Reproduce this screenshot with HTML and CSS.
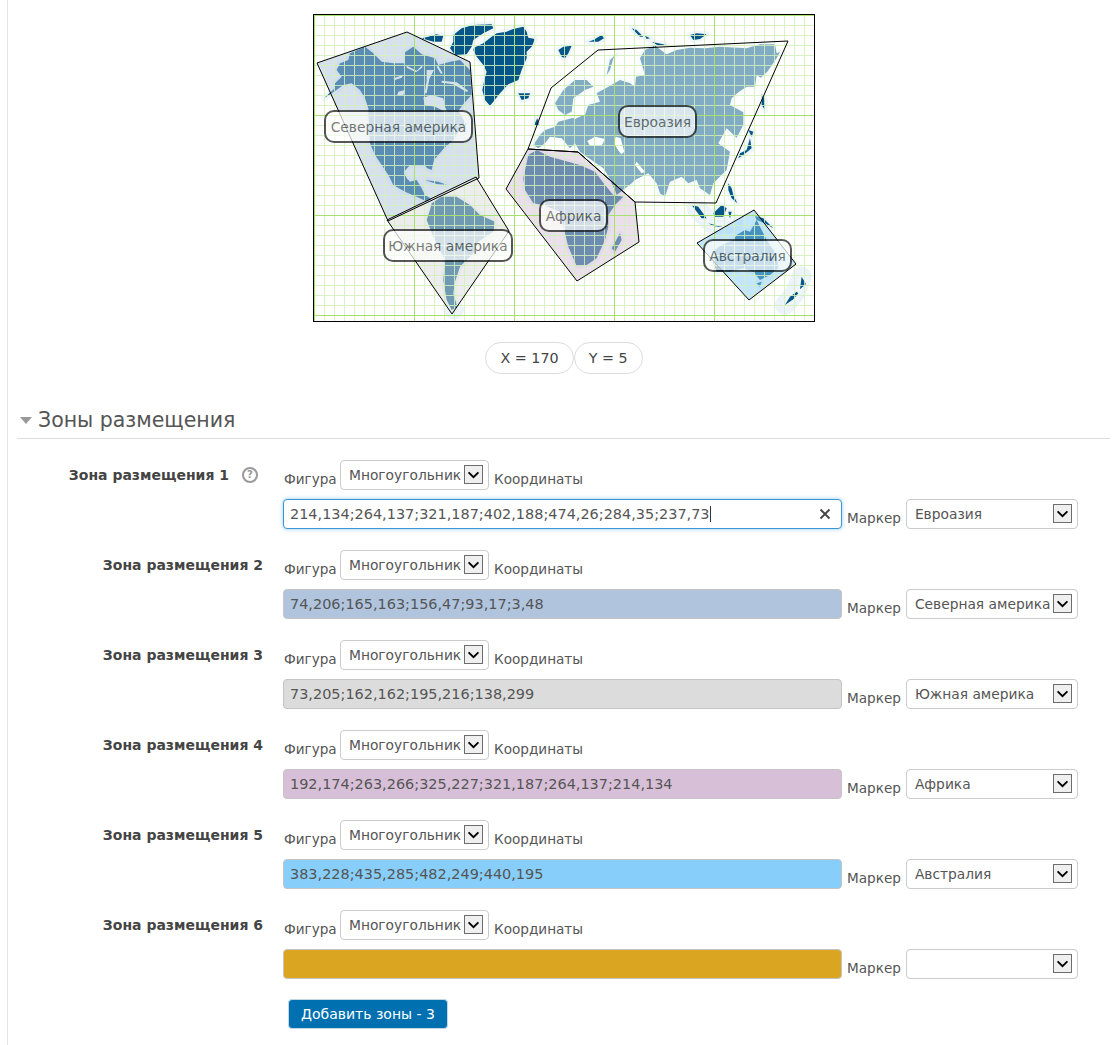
FILE: index.html
```html
<!DOCTYPE html>
<html lang="ru">
<head>
<meta charset="utf-8">
<title>Зоны размещения</title>
<link rel="stylesheet" href="styles.css">
</head>
<body>
<main class="page">
  <div class="preview">
    <div class="map">
      <svg class="map-art" viewBox="0 0 500 306" width="500" height="306" aria-hidden="true">
        <defs>
          <pattern id="minor" width="10" height="10" patternUnits="userSpaceOnUse">
            <path class="grid-minor" d="M0 0H10V1H1V10H0Z"/>
          </pattern>
          <pattern id="major" width="100" height="100" patternUnits="userSpaceOnUse">
            <path class="grid-major" d="M0 0H100V1H1V100H0Z"/>
          </pattern>
          <g id="land">
            <g transform="translate(-4 0) scale(.3333)">
              <path d="M165 95L190 115 215 140 250 145 285 145 285 112 310 95 335 118 375 130 385 150 420 140 450 135 480 165 485 240 462 265 445 288 470 330 445 350 430 375 402 400 372 435 365 465 352 460 345 452 300 450 282 470 290 490 300 500 320 495 335 520 345 540 365 552 352 560 320 545 285 530 250 510 235 480 215 450 195 420 180 385 177 330 175 280 165 250 150 225 125 205 100 210 75 228 42 250 72 222 75 205 95 185 80 165 90 145 115 135 120 115Z"/>
              <path d="M335 70L355 65 378 58 400 62 395 80 370 80Z"/>
              <path d="M430 60L455 40 490 30 545 28 550 40 520 55 490 75 485 95 470 118 435 120 420 100 430 80Z"/>
              <path d="M492 98L520 85 545 65 560 55 590 50 610 42 640 35 650 50 655 68 675 72 665 95 650 110 650 130 635 165 625 195 595 208 570 235 550 260 540 272 525 255 517 225 523 195 530 170 520 150 500 125 490 105Z"/>
              <path d="M625 235L660 235 655 250 635 255Z"/>
            </g>
            <g transform="translate(-4 155) scale(.3333)">
              <path d="M365 100L395 80 440 80 480 105 510 135 555 155 550 185 505 215 490 250 450 290 435 335 430 370 442 412 425 420 410 390 400 330 405 270 370 200 350 150 360 120Z"/>
              <path d="M345 30L385 35 410 44 380 42Z"/>
            </g>
            <g transform="translate(216 0) scale(.3333)">
              <path d="M10 390L30 360 45 345 75 335 85 320 125 310 165 300 175 270 210 260 200 235 235 215 270 195 300 205 315 215 318 185 345 180 330 130 345 105 375 92 410 118 440 105 480 98 525 100 570 95 650 100 690 88 735 88 740 115 750 110 740 130 712 170 692 188 680 180 675 215 650 215 625 232 605 250 600 270 640 292 640 330 620 368 590 340 565 385 600 410 590 465 550 505 540 540 510 520 500 495 475 505 455 485 420 500 405 545 390 535 380 505 355 475 315 495 305 505 260 540 255 525 230 475 220 460 170 425 150 410 135 385 120 400 95 370 60 365 45 385 25 400Z"/>
              <path d="M75 265L100 225 135 195 170 195 190 215 165 225 130 250 125 290 105 300 85 285Z"/>
              <path d="M230 180L240 135 262 115 250 130 240 165Z"/>
              <path d="M12 330L22 310 28 330Z"/>
              <path d="M85 105L100 95 125 92 115 115 105 130 95 125Z"/>
              <path d="M175 80L190 75 215 60 222 70 205 80Z"/>
              <path d="M305 40L320 45 340 65 330 65Z"/>
              <path d="M345 62L360 70 350 72Z"/>
              <path d="M365 80L385 85 410 90 385 92Z"/>
              <path d="M480 60L500 55 530 58 510 72 490 75Z"/>
              <path d="M695 235L705 255 705 285 695 270Z"/>
              <path d="M655 345L670 350 665 365Z"/>
              <path d="M660 370L665 400 640 420 625 430 630 415 650 405Z"/>
            </g>
            <g transform="translate(186 125) scale(.3333)">
              <path d="M85 45L110 30 150 50 185 60 240 75 285 95 315 135 340 165 370 170 345 195 325 225 325 260 315 300 290 355 260 375 230 378 205 320 195 280 180 215 130 195 100 190 75 150 70 115Z"/>
              <path d="M360 280L365 300 345 335 335 325Z"/>
              <path d="M685 130L695 145 700 165 712 190 695 175 685 150Z"/>
              <path d="M640 220L665 195 680 205 670 230 645 230Z"/>
              <path d="M575 195L595 200 620 235 605 235Z"/>
              <path d="M625 250L670 262 640 258Z"/>
              <path d="M685 215L695 215 690 235Z"/>
              <path d="M765 228L790 235 820 265 795 250 770 240Z"/>
              <path d="M645 330L665 315 700 300 710 285 735 270 750 275 770 240 780 260 800 300 830 345 835 385 810 405 780 420 760 395 730 385 690 395 650 395 640 370Z"/>
              <path d="M770 430L785 425 780 440Z"/>
              <path d="M905 410L918 432 900 448Z"/>
              <path d="M890 455L870 470 855 495 880 478 895 460Z"/>
            </g>
          </g>
        </defs>
        <rect class="map-sea" width="500" height="306"/>
        <g class="shelf" transform="translate(186 125) scale(.3333)">
          <path d="M905 410L885 460 855 495"/>
          <path d="M690 345H800V390"/>
          <path d="M590 205L640 255 700 250"/>
        </g>
        <g class="shelf" transform="translate(-4 155) scale(.3333)">
          <path d="M428 415L432 418"/>
        </g>
        <use href="#land" class="land-halo"/>
        <use href="#land" class="land-fill"/>
        <g class="lakes" transform="translate(-4 0) scale(.3333)">
          <path d="M340 248L365 240 400 250 405 275 412 292 395 285 375 275 345 270Z"/>
          <path d="M250 190L280 180 275 188 255 195Z"/>
          <path d="M265 230L285 225 280 240 262 240Z"/>
          <path d="M350 165L372 165 358 192 350 235 344 235 350 198Z"/>
          <path d="M395 197L440 202 475 227 470 231 430 208 395 203Z"/>
          <path d="M290 152L320 167 335 152 338 157 318 172 290 158Z"/>
          <path d="M385 152L398 175 393 177 380 155Z"/>
        </g>
        <g class="lakes" transform="translate(216 0) scale(.3333)">
          <path d="M125 305L140 290 145 270 165 255 190 240 165 275 160 300 135 312Z"/>
          <path d="M172 378L195 365 225 372 215 392 180 392Z"/>
          <path d="M257 365L272 370 283 410 274 418 264 405 252 385Z"/>
          <path d="M320 440L345 470 335 475 315 450Z"/>
        </g>
        <g class="zones">
          <polygon class="zone-white" points="214,134 264,137 321,187 402,188 474,26 284,35 237,73"/>
          <polygon class="zone-steel" points="74,206 165,163 156,47 93,17 3,48"/>
          <polygon class="zone-gray" points="73,205 162,162 195,216 138,299"/>
          <polygon class="zone-thistle" points="192,174 263,266 325,227 321,187 264,137 214,134"/>
          <polygon class="zone-sky" points="383,228 435,285 482,249 440,195"/>
        </g>
        <rect class="grid" width="500" height="306" fill="url(#minor)"/>
        <rect class="grid" width="500" height="306" fill="url(#major)"/>
        <g class="zone-lines">
          <polygon points="214,134 264,137 321,187 402,188 474,26 284,35 237,73"/>
          <polygon points="74,206 165,163 156,47 93,17 3,48"/>
          <polygon points="73,205 162,162 195,216 138,299"/>
          <polygon points="192,174 263,266 325,227 321,187 264,137 214,134"/>
          <polygon points="383,228 435,285 482,249 440,195"/>
        </g>
      </svg>
      <span class="marker m-na">Северная америка</span>
      <span class="marker m-eu">Евроазия</span>
      <span class="marker m-sa">Южная америка</span>
      <span class="marker m-af">Африка</span>
      <span class="marker m-au">Австралия</span>
    </div>
    <div class="coords">
      <span class="pill">X = 170</span>
      <span class="pill">Y = 5</span>
    </div>
  </div>

  <section class="zones-section">
    <h3 class="section-title"><span class="caret-down"></span>Зоны размещения</h3>
    <div class="rows">

      <div class="row">
        <div class="row-label"><strong>Зона размещения 1</strong><span class="help">?</span></div>
        <div class="row-body">
          <div class="line">
            <span class="cap cap-first">Фигура</span>
            <div class="select select-shape">Многоугольник<span class="arrow"><svg viewBox="0 0 19 19"><path d="M4 7l5.500 5.500L15 7"/></svg></span></div>
            <span class="cap">Координаты</span>
          </div>
          <div class="line">
            <div class="field field-focus"><span>214,134;264,137;321,187;402,188;474,26;284,35;237,73</span><i class="text-caret"></i><svg class="clear" viewBox="0 0 12 12"><path d="M1.500 1.500l9 9M10.500 1.500l-9 9"/></svg></div>
            <span class="cap">Маркер</span>
            <div class="select select-marker">Евроазия<span class="arrow"><svg viewBox="0 0 19 19"><path d="M4 7l5.500 5.500L15 7"/></svg></span></div>
          </div>
        </div>
      </div>

      <div class="row">
        <div class="row-label"><strong>Зона размещения 2</strong></div>
        <div class="row-body">
          <div class="line">
            <span class="cap cap-first">Фигура</span>
            <div class="select select-shape">Многоугольник<span class="arrow"><svg viewBox="0 0 19 19"><path d="M4 7l5.500 5.500L15 7"/></svg></span></div>
            <span class="cap">Координаты</span>
          </div>
          <div class="line">
            <div class="field bg-steel"><span>74,206;165,163;156,47;93,17;3,48</span></div>
            <span class="cap">Маркер</span>
            <div class="select select-marker">Северная америка<span class="arrow"><svg viewBox="0 0 19 19"><path d="M4 7l5.500 5.500L15 7"/></svg></span></div>
          </div>
        </div>
      </div>

      <div class="row">
        <div class="row-label"><strong>Зона размещения 3</strong></div>
        <div class="row-body">
          <div class="line">
            <span class="cap cap-first">Фигура</span>
            <div class="select select-shape">Многоугольник<span class="arrow"><svg viewBox="0 0 19 19"><path d="M4 7l5.500 5.500L15 7"/></svg></span></div>
            <span class="cap">Координаты</span>
          </div>
          <div class="line">
            <div class="field bg-gray"><span>73,205;162,162;195,216;138,299</span></div>
            <span class="cap">Маркер</span>
            <div class="select select-marker">Южная америка<span class="arrow"><svg viewBox="0 0 19 19"><path d="M4 7l5.500 5.500L15 7"/></svg></span></div>
          </div>
        </div>
      </div>

      <div class="row">
        <div class="row-label"><strong>Зона размещения 4</strong></div>
        <div class="row-body">
          <div class="line">
            <span class="cap cap-first">Фигура</span>
            <div class="select select-shape">Многоугольник<span class="arrow"><svg viewBox="0 0 19 19"><path d="M4 7l5.500 5.500L15 7"/></svg></span></div>
            <span class="cap">Координаты</span>
          </div>
          <div class="line">
            <div class="field bg-thistle"><span>192,174;263,266;325,227;321,187;264,137;214,134</span></div>
            <span class="cap">Маркер</span>
            <div class="select select-marker">Африка<span class="arrow"><svg viewBox="0 0 19 19"><path d="M4 7l5.500 5.500L15 7"/></svg></span></div>
          </div>
        </div>
      </div>

      <div class="row">
        <div class="row-label"><strong>Зона размещения 5</strong></div>
        <div class="row-body">
          <div class="line">
            <span class="cap cap-first">Фигура</span>
            <div class="select select-shape">Многоугольник<span class="arrow"><svg viewBox="0 0 19 19"><path d="M4 7l5.500 5.500L15 7"/></svg></span></div>
            <span class="cap">Координаты</span>
          </div>
          <div class="line">
            <div class="field bg-sky"><span>383,228;435,285;482,249;440,195</span></div>
            <span class="cap">Маркер</span>
            <div class="select select-marker">Австралия<span class="arrow"><svg viewBox="0 0 19 19"><path d="M4 7l5.500 5.500L15 7"/></svg></span></div>
          </div>
        </div>
      </div>

      <div class="row">
        <div class="row-label"><strong>Зона размещения 6</strong></div>
        <div class="row-body">
          <div class="line">
            <span class="cap cap-first">Фигура</span>
            <div class="select select-shape">Многоугольник<span class="arrow"><svg viewBox="0 0 19 19"><path d="M4 7l5.500 5.500L15 7"/></svg></span></div>
            <span class="cap">Координаты</span>
          </div>
          <div class="line">
            <div class="field bg-gold"></div>
            <span class="cap">Маркер</span>
            <div class="select select-marker"><span class="arrow"><svg viewBox="0 0 19 19"><path d="M4 7l5.500 5.500L15 7"/></svg></span></div>
          </div>
        </div>
      </div>

    </div>
    <div class="actions"><button class="btn" type="button">Добавить зоны - 3</button></div>
  </section>
</main>
</body>
</html>
```

FILE: styles.css
```css
* { box-sizing: border-box; }
html, body { margin: 0; padding: 0; background: #fff; }
body {
  font-family: "DejaVu Sans", Verdana, sans-serif;
  font-size: 14.4px;
  color: #555;
}
.page {
  margin-left: 7px;
  border-left: 1px solid #e6e6e6;
  height: 1045px;
  overflow: hidden;
  padding-top: 14px;
}

/* preview */
.preview { display: flex; flex-direction: column; align-items: center; }
.map {
  position: relative;
  width: 502px;
  height: 308px;
  border: 1px solid #000;
  background: #fff;
}
.map-art { display: block; }
.map-sea { fill: #fff; }
.shelf path { fill: none; stroke: #edf3fa; stroke-width: 60; stroke-linecap: round; stroke-linejoin: round; }
.land-halo { fill: #f1f6fb; stroke: #f1f6fb; stroke-width: 18; stroke-linejoin: round; }
.land-fill { fill: #045689; }
.lakes path { fill: #fff; }
.zones polygon { fill-opacity: .5; }
.zone-white { fill: #fff; }
.zone-steel { fill: #b0c4de; }
.zone-gray { fill: #dcdcdc; }
.zone-thistle { fill: #d8bfd8; }
.zone-sky { fill: #87cefa; }
.grid { shape-rendering: crispEdges; }
.grid-minor { fill: #d3f0bb; fill-opacity: .85; }
.grid-major { fill: #a8e070; }
.zone-lines polygon { fill: none; stroke: #000; stroke-width: 1; }

.marker {
  position: absolute;
  height: 33px;
  display: flex;
  align-items: center;
  justify-content: center;
  white-space: nowrap;
  font-size: 13.8px;
  color: #4a4a4a;
  background: #fff;
  border: 2px solid #111;
  border-radius: 10px;
  opacity: .7;
}
.m-na { left: 10px; top: 95px; width: 149px; }
.m-eu { left: 304px; top: 90px; width: 79px; }
.m-sa { left: 69px; top: 214px; width: 130px; }
.m-af { left: 225px; top: 184px; width: 69px; }
.m-au { left: 389px; top: 224px; width: 89px; }

.coords { display: flex; margin-top: 20px; }
.pill {
  height: 32px;
  padding: 0 14px;
  display: flex;
  align-items: center;
  border: 1px solid #ddd;
  border-radius: 16px;
  font-size: 14.3px;
  color: #444;
}

/* section */
.zones-section { margin: 32px 10px 0 9px; }
.section-title {
  display: flex;
  align-items: center;
  height: 33px;
  margin: 0;
  padding: 0 0 4px 3px;
  border-bottom: 1px solid #ddd;
  font-size: 20.500px;
  font-weight: 400;
  color: #555;
}
.caret-down {
  width: 0;
  height: 0;
  margin-right: 6px;
  border-left: 6px solid transparent;
  border-right: 6px solid transparent;
  border-top: 7px solid #999;
}
.rows { display: flex; flex-direction: column; gap: 21px; margin-top: 21px; }
.row { display: grid; grid-template-columns: 266px 1fr; }
.row-label {
  display: flex;
  justify-content: flex-end;
  align-items: flex-start;
  padding: 7px 20px 0 0;
  font-size: 14px;
  color: #444;
}
.help {
  width: 16px;
  height: 16px;
  margin: 0 5px 0 13px;
  border: 2px solid #999;
  border-radius: 50%;
  font-size: 10px;
  font-weight: 700;
  line-height: 12px;
  text-align: center;
  color: #999;
}
.row-body { display: flex; flex-direction: column; gap: 9px; }
.line { display: flex; align-items: flex-end; gap: 5px; height: 30px; }
.cap { font-size: 13.6px; line-height: 20px; margin-bottom: 1px; color: #555; white-space: nowrap; }
.cap-first { width: 52px; margin-left: 1px; margin-right: -1px; }
.select {
  flex: none;
  position: relative;
  height: 30px;
  padding: 0 0 1px 8px;
  display: flex;
  align-items: center;
  border: 1px solid #ccc;
  border-radius: 4px;
  background: #fff;
  font-size: 13.8px;
  color: #555;
  white-space: nowrap;
}
.select-shape { width: 149px; }
.select-marker { width: 172px; padding-bottom: 0; }
.arrow {
  position: absolute;
  right: 5px;
  top: 4px;
  width: 19px;
  height: 19px;
  border: 1px solid #6d6d6d;
  background: #efefef;
}
.arrow svg { display: block; width: 17px; height: 17px; }
.arrow path { fill: none; stroke: #000; stroke-width: 2; }
.field {
  flex: none;
  display: flex;
  align-items: center;
  width: 559px;
  height: 30px;
  padding: 0 6px;
  border: 1px solid #c4c4c4;
  border-radius: 4px;
  font-size: 14.450px;
  color: #555;
  white-space: nowrap;
}
.field-focus {
  position: relative;
  border-color: #3a97d4;
  background: #fff;
  box-shadow: 0 0 4px rgba(82, 168, 236, .6);
}
.text-caret { width: 1px; height: 16px; background: #333; }
.clear {
  position: absolute;
  right: 10px;
  top: 8px;
  width: 12px;
  height: 12px;
}
.clear path { fill: none; stroke: #444; stroke-width: 1.800; }
.bg-steel { background: #b0c4de; }
.bg-gray { background: #dcdcdc; }
.bg-thistle { background: #d8bfd8; }
.bg-sky { background: #87cefa; }
.bg-gold { background: #daa520; }

.actions { margin: 20px 0 0 271px; }
.btn {
  height: 30px;
  width: 160px;
  padding: 0;
  border: 1px solid #c4d7e6;
  border-radius: 4px;
  background: #0070b0;
  color: #fff;
  font-family: inherit;
  font-size: 14px;
}
```
